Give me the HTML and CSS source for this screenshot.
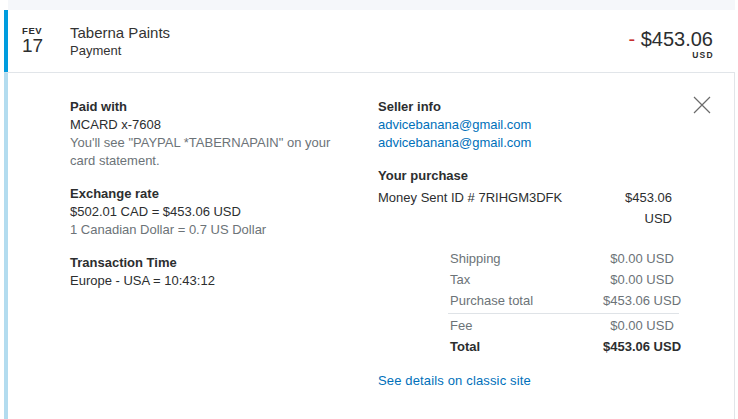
FILE: index.html
```html
<!DOCTYPE html>
<html>
<head>
<meta charset="utf-8">
<link rel="stylesheet" href="styles.css">
</head>
<body>
<div class="list">
  <div class="prev-row"></div>
  <div class="txn-head">
    <div class="date">
      <span class="month">FEV</span>
      <span class="day">17</span>
    </div>
    <div class="who">
      <div class="name">Taberna Paints</div>
      <div class="kind">Payment</div>
    </div>
    <div class="amount">
      <div class="value"><span class="minus">-</span> $453.06</div>
      <div class="cur">USD</div>
    </div>
  </div>
  <div class="txn-detail">
    <button class="close" aria-label="Close">
      <svg width="18" height="18" viewBox="0 0 18 18"><path d="M1 1 L17 17 M17 1 L1 17" stroke="#6b6b6b" stroke-width="1.2" fill="none"/></svg>
    </button>
    <div class="col left">
      <section class="block">
        <h3>Paid with</h3>
        <p>MCARD x-7608</p>
        <p class="muted">You'll see "PAYPAL *TABERNAPAIN" on your card statement.</p>
      </section>
      <section class="block">
        <h3>Exchange rate</h3>
        <p>$502.01 CAD = $453.06 USD</p>
        <p class="muted">1 Canadian Dollar = 0.7 US Dollar</p>
      </section>
      <section class="block">
        <h3>Transaction Time</h3>
        <p>Europe - USA = 10:43:12</p>
      </section>
    </div>
    <div class="col right">
      <section class="block">
        <h3>Seller info</h3>
        <a class="link" href="#">advicebanana@gmail.com</a>
        <a class="link" href="#">advicebanana@gmail.com</a>
      </section>
      <section class="block purchase">
        <h3>Your purchase</h3>
        <div class="item">
          <span class="item-name">Money Sent ID # 7RIHGM3DFK</span>
          <span class="item-price">$453.06 USD</span>
        </div>
      </section>
      <div class="totals">
        <div class="trow"><span>Shipping</span><span class="tv">$0.00 USD</span></div>
        <div class="trow"><span>Tax</span><span class="tv">$0.00 USD</span></div>
        <div class="trow"><span>Purchase total</span><span class="tv">$453.06 USD</span></div>
        <div class="trow sep"><span>Fee</span><span class="tv">$0.00 USD</span></div>
        <div class="trow total"><span>Total</span><span class="tv">$453.06 USD</span></div>
      </div>
      <a class="link classic" href="#">See details on classic site</a>
    </div>
  </div>
</div>
</body>
</html>
```

FILE: styles.css
```css
html, body {
  margin: 0;
  padding: 0;
  background: #ffffff;
}
body {
  font-family: "Liberation Sans", Arial, sans-serif;
  color: #2c2e2f;
  font-size: 13px;
}
.list {
  margin-left: 4px;
  width: 731px;
}
.prev-row {
  height: 10px;
  margin-left: 4px;
  background: #f5f7fa;
}
.txn-head {
  height: 62px;
  border-left: 4px solid #009cde;
  display: flex;
  align-items: flex-start;
  box-sizing: border-box;
}
.date {
  width: 48px;
  padding-left: 14px;
  padding-top: 16px;
  display: flex;
  flex-direction: column;
  color: #2c2e2f;
}
.month {
  font-size: 9.5px;
  font-weight: bold;
  line-height: 10px;
  letter-spacing: 0.6px;
}
.day {
  font-size: 19px;
  line-height: 20px;
}
.who {
  padding-top: 13px;
  flex: 1;
}
.name {
  font-size: 15px;
  line-height: 20px;
  color: #333;
}
.kind {
  font-size: 13px;
  line-height: 15px;
  color: #333;
}
.amount {
  padding-top: 19px;
  padding-right: 22px;
  text-align: right;
}
.value {
  font-size: 20px;
  line-height: 20px;
  color: #2c2e2f;
}
.minus {
  color: #c72e2e;
}
.cur {
  font-size: 8.5px;
  font-weight: bold;
  letter-spacing: 1.3px;
  line-height: 10px;
  margin-right: -1px;
  margin-top: 1px;
}
.txn-detail {
  position: relative;
  border-left: 4px solid #b3dcef;
  border-top: 1px solid #e1e5e9;
  border-right: 1px solid #e1e5e9;
  height: 347px;
  box-sizing: border-box;
  display: grid;
  grid-template-columns: 308px 1fr;
  padding: 25px 0 0 62px;
}
.close {
  position: absolute;
  top: 23px;
  right: 23px;
  background: none;
  border: 0;
  padding: 0;
  width: 18px;
  height: 18px;
  cursor: pointer;
}
.close svg { display: block; }
.left .block {
  max-width: 276px;
}
.block {
  margin-bottom: 15px;
}
.block h3 {
  margin: 0;
  font-size: 13px;
  font-weight: bold;
  line-height: 18px;
  color: #2c2e2f;
}
.block p {
  margin: 0;
  line-height: 18px;
}
.muted {
  color: #6c7378;
}
.link {
  display: block;
  color: #0070ba;
  text-decoration: none;
  line-height: 18px;
}
.purchase h3 {
  margin-bottom: 2px;
}
.item {
  display: flex;
  width: 294px;
  justify-content: space-between;
  line-height: 21px;
}
.item-price {
  width: 50px;
  text-align: right;
}
.purchase {
  margin-bottom: 19px;
}
.totals {
  margin-left: 72px;
  width: 233px;
  color: #6c7378;
}
.trow {
  display: grid;
  grid-template-columns: 151px 82px;
  line-height: 21px;
}
.tv {
  text-align: center;
  white-space: nowrap;
}
.trow.sep {
  border-top: 1px solid #dfe3e7;
  margin-top: 2px;
  padding-top: 1px;
  margin-left: -2px;
  padding-left: 2px;
  width: 229px;
  grid-template-columns: 151px 82px;
}
.trow.total {
  color: #2c2e2f;
  font-weight: bold;
}
.classic {
  margin-top: 15px;
  letter-spacing: 0.15px;
}
```
